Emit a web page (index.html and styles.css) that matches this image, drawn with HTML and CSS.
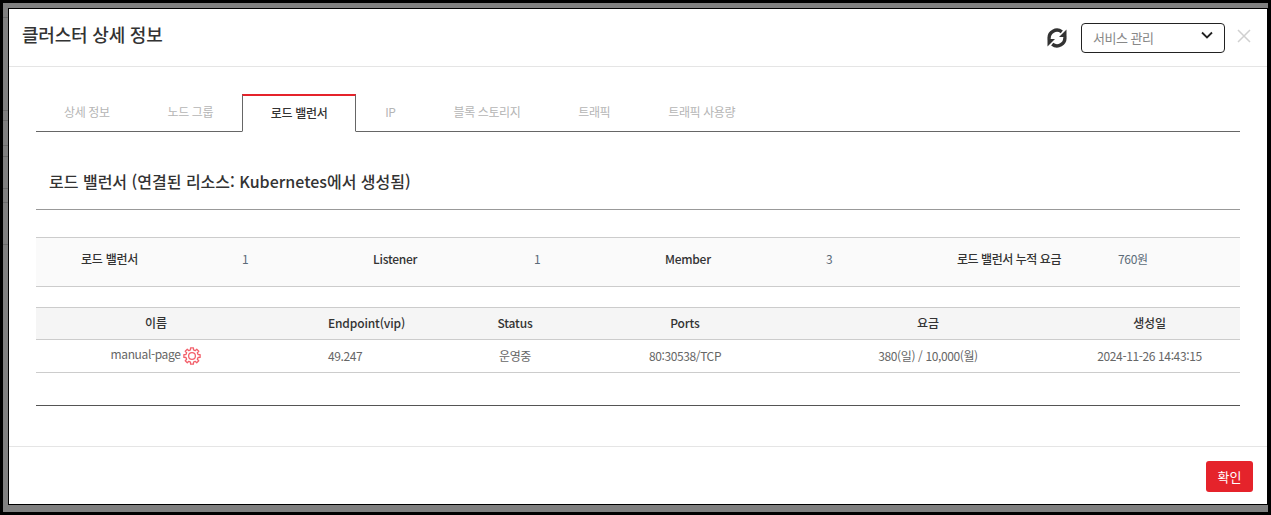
FILE: index.html
```html
<!DOCTYPE html>
<html lang="ko">
<head>
<meta charset="utf-8">
<title>클러스터 상세 정보</title>
<link rel="stylesheet" href="styles.css">
</head>
<body>
<div class="frame">
  <div class="modal">
    <header class="head">
      <h1 class="title">클러스터 상세 정보</h1>
      <div class="head-tools">
        <svg class="refresh" viewBox="0 0 22 22" width="22" height="22"><g fill="#333"><path d="M3.200 12A7.800 7.800 0 0 1 15.800 4.900" fill="none" stroke="#333" stroke-width="3.400"/><path d="M18.800 10A7.800 7.800 0 0 1 6.200 17.100" fill="none" stroke="#333" stroke-width="3.400"/><path d="M20.500 2.500v7.500h-7.500z"/><path d="M1.500 19.500V12h7.500z"/></g></svg>
        <div class="select"><span>서비스 관리</span><svg class="chev" viewBox="0 0 12 8" width="12" height="8"><path d="M1 1.500l5 5 5-5" fill="none" stroke="#222" stroke-width="1.800"/></svg></div>
        <svg class="close" viewBox="0 0 14 14" width="14" height="14"><path d="M1 1l12 12M13 1L1 13" stroke="#d0d0d0" stroke-width="1.500" fill="none"/></svg>
      </div>
    </header>
    <main class="body">
      <nav class="tabs">
        <a class="tab">상세 정보</a>
        <a class="tab">노드 그룹</a>
        <a class="tab active">로드 밸런서</a>
        <a class="tab">IP</a>
        <a class="tab">블록 스토리지</a>
        <a class="tab">트래픽</a>
        <a class="tab">트래픽 사용량</a>
      </nav>
      <h2 class="section">로드 밸런서 (연결된 리소스: Kubernetes에서 생성됨)</h2>
      <div class="summary">
        <b>로드 밸런서</b><span class="val">1</span>
        <b>Listener</b><span class="val">1</span>
        <b>Member</b><span class="val">3</span>
        <b class="long">로드 밸런서 누적 요금</b><span class="val">760원</span>
      </div>
      <table class="grid">
        <colgroup><col class="c1"><col class="c2"><col class="c3"><col class="c4"><col class="c5"><col class="c6"></colgroup>
        <thead><tr><th>이름</th><th>Endpoint(vip)</th><th>Status</th><th>Ports</th><th>요금</th><th>생성일</th></tr></thead>
        <tbody><tr>
          <td>manual-page<svg class="gear" viewBox="0 0 24 24" width="18" height="18"><g fill="none" stroke="#f2606b" stroke-width="1.700" stroke-linejoin="round"><path d="M9.990 3.950L10.090 1.170H13.910L14.010 3.950L16.270 4.890L18.310 2.990L21.010 5.690L19.110 7.730L20.050 9.990L22.830 10.090V13.910L20.050 14.010L19.110 16.270L21.010 18.310L18.310 21.010L16.270 19.110L14.010 20.050L13.910 22.830H10.090L9.990 20.050L7.730 19.110L5.690 21.010L2.990 18.310L4.890 16.270L3.950 14.010L1.170 13.910V10.090L3.950 9.990L4.890 7.730L2.990 5.690L5.690 2.990L7.730 4.890Z"/><circle cx="12" cy="12" r="4.500"/></g></svg></td>
          <td class="ep">49.247</td><td>운영중</td><td>80:30538/TCP</td><td>380(일) / 10,000(월)</td><td>2024-11-26 14:43:15</td>
        </tr></tbody>
      </table>
      <div class="end-rule"></div>
    </main>
    <footer class="foot"><button class="ok">확인</button></footer>
  </div>
</div>
</body>
</html>
```
FILE: styles.css
```css
* { box-sizing: border-box; }
html, body { margin: 0; padding: 0; }
body {
  width: 1271px; height: 515px; overflow: hidden; background: #000;
  font-family: "Noto Sans CJK KR", "Noto Sans", sans-serif; font-size: 12px; color: #666;
}
.frame {
  margin: 3px; width: 1265px; height: 509px; padding: 5px 0 7px 5px; display: flex;
  background-color: #808080;
  background-repeat: no-repeat;
  background-size: 5px 1px;
  background-image:
    linear-gradient(#6c6c6c, #6c6c6c), linear-gradient(#6c6c6c, #6c6c6c),
    linear-gradient(#6c6c6c, #6c6c6c), linear-gradient(#6c6c6c, #6c6c6c),
    linear-gradient(#6c6c6c, #6c6c6c), linear-gradient(#6c6c6c, #6c6c6c),
    linear-gradient(#6c6c6c, #6c6c6c), linear-gradient(#6c6c6c, #6c6c6c);
  background-position: 0 14px, 0 107px, 0 117px, 0 142px, 0 153px, 0 185px, 0 199px, 0 241px;
}
.modal {
  flex: 1; background: #fff; border: 1px solid #000; display: flex; flex-direction: column;
}
.head {
  height: 58px; border-bottom: 1px solid #e5e5e5; display: flex; align-items: center;
  justify-content: space-between; padding: 0 16px 0 13px;
}
.title { margin: 0 0 8px; font-size: 18px; font-weight: 500; color: #333; letter-spacing: -0.2px; }
.head-tools { display: flex; align-items: center; }
.refresh { margin: 0 13px 0 0; }
.select {
  width: 144px; height: 30px; border: 1px solid #222; border-radius: 4px; display: flex;
  align-items: center; justify-content: space-between; padding: 0 11px 0 11px; color: #888; font-size: 13px; letter-spacing: -0.5px;
}
.chev { margin-bottom: 5px; }
.close { margin: 0 0 4px 12px; }
.body { flex: 1; padding: 27px 27px 0; }
.tabs { display: flex; height: 38px; border-bottom: 1px solid #666; }
.tab { height: 38px; padding: 9px 29px 0; color: #b5b5b5; font-size: 12px; letter-spacing: -0.4px; }
.tab:first-child { padding-left: 28px; }
.tab.active {
  border: 1px solid #666; border-top: 2px solid #e5232b; border-bottom: 1px solid #fff;
  color: #333; font-weight: 500; padding: 8px 27.700px 0; letter-spacing: -0.3px;
}
.section { margin: 0; height: 78px; padding: 37px 13px 0; font-size: 16px; font-weight: 500; color: #333; border-bottom: 1px solid #999; }
.summary {
  margin-top: 27px; height: 50px; background: #fafafa; border-top: 1px solid #ccc; border-bottom: 1px solid #ccc;
  display: grid; grid-template-columns: repeat(8, 146px) 36px; align-items: center;
  padding-bottom: 7px;
}
.summary b { font-weight: 500; color: #333; padding-left: 45px; letter-spacing: -0.25px; }
.summary b.long { letter-spacing: -0.45px; padding-left: 45px; white-space: nowrap; }
.val { color: #5b6b78; padding-left: 60px; letter-spacing: -0.3px; }
.grid { margin-top: 20px; width: 100%; border-collapse: collapse; table-layout: fixed; }
.c1 { width: 240px; } .c2 { width: 181px; } .c3 { width: 116px; } .c4 { width: 224px; } .c5 { width: 262px; } .c6 { width: 181px; }
.grid th { height: 32px; background: #f5f5f5; font-weight: 500; color: #333; border-top: 1px solid #ccc; border-bottom: 1px solid #ccc; padding: 0 0 2px; letter-spacing: -0.15px; }
.grid td { height: 33px; text-align: center; border-bottom: 1px solid #ccc; padding: 0 0 2px; letter-spacing: -0.38px; }
.grid td.ep { text-align: left; padding-left: 52px; }
.gear { vertical-align: middle; margin-left: 3px; }
.end-rule { margin-top: 32px; border-top: 1px solid #555; }
.foot { height: 58px; border-top: 1px solid #e5e5e5; display: flex; justify-content: flex-end; align-items: center; padding: 2px 14px 0 0; }
.ok { width: 47px; height: 31px; border: 0; border-radius: 3px; background: #e5232b; color: #fff; font: inherit; font-size: 13px; padding: 0; }
```
